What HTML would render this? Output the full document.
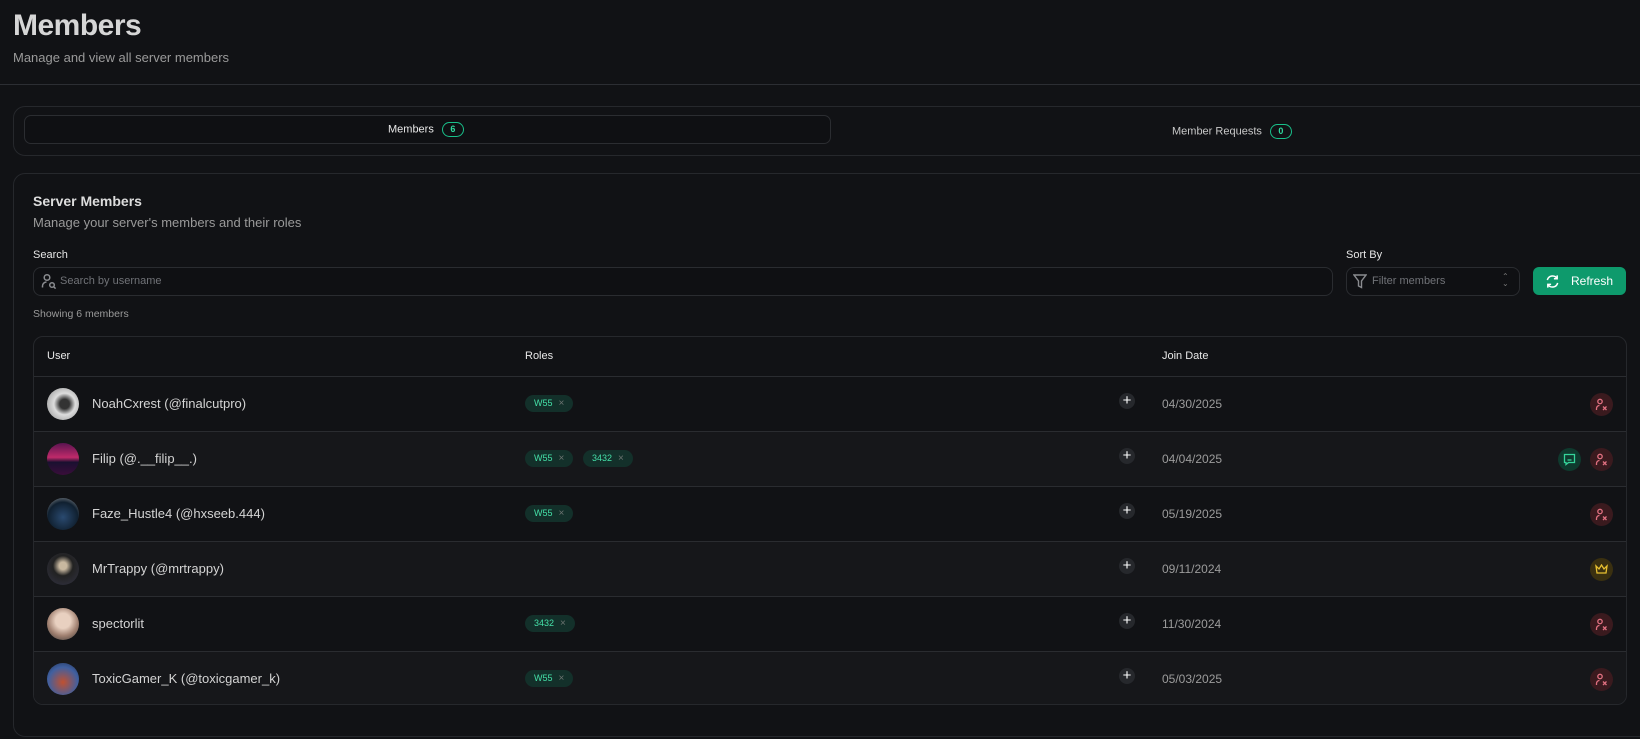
<!DOCTYPE html><html><head><meta charset="utf-8"><style>
*{box-sizing:border-box;margin:0;padding:0}
body{width:1640px;height:739px;overflow:hidden;background:#111215;font-family:"Liberation Sans",sans-serif;color:#e5e5e5;position:relative}
.abs{position:absolute}
h1{position:absolute;left:13px;top:9px;font-size:30px;font-weight:bold;color:#d6d6d6;letter-spacing:-0.5px}
.sub{left:13px;top:50px;font-size:13px;color:#9a9a9a}
.hr{left:0;top:84px;width:1640px;height:1px;background:#2c2e33}
.tabs{left:13px;top:106px;width:1660px;height:50px;border:1px solid #26282c;border-radius:12px;background:#111215}
.tab1{left:24px;top:115px;width:807px;height:29px;border:1px solid #2b2d31;border-radius:7px;background:#0f1013}
.badge{display:inline-block;border:1.5px solid #19c08a;color:#2fd99f;border-radius:9px;font-size:9px;font-weight:bold;width:22px;height:15px;line-height:12px;text-align:center;vertical-align:middle;margin-left:8px}
.tl{font-size:11px;color:#e8e8e8}
.card{left:13px;top:173px;width:1660px;height:564px;border:1px solid #26282c;border-radius:12px;background:#111215}
.lbl{font-size:11px;color:#e6e6e6}
.input{border:1px solid #2a2c30;border-radius:8px;background:#0f1013;height:29px}
.ph{font-size:11px;color:#707277}
.btn{left:1533px;top:267px;width:93px;height:28px;background:#0e9a6c;border-radius:6px;color:#fff;font-size:12px}
.table{left:33px;top:336px;width:1594px;height:369px;border:1px solid #26282c;border-radius:10px;overflow:hidden}
.th{position:absolute;top:0;height:39px;line-height:39px;font-size:11px;color:#e8e8e8}
.row{position:absolute;left:0;width:100%;height:55px;border-top:1px solid #2a2c30}
.av{position:absolute;left:13px;top:11px;width:32px;height:32px;border-radius:50%}
.nm{position:absolute;left:58px;top:19px;font-size:13px;color:#d4d4d4}
.role{position:absolute;top:18px;height:17px;border-radius:9px;background:#13302a;color:#45e0a8;font-size:9px;line-height:17px;padding:0 9px}
.role span{color:#6b7370;margin-left:6px;font-size:10px}
.plus{position:absolute;left:1085px;top:16px;width:16px;height:16px;border-radius:50%;background:#26282c;color:#fff;font-size:15px;line-height:15px;text-align:center}
.dt{position:absolute;left:1128px;top:20px;font-size:12px;color:#9c9c9c}
.ic{position:absolute;top:16px;width:23px;height:23px;border-radius:50%}
.rm{left:1556px;background:#3a1a1e}
.rm svg,.ch svg{position:absolute;left:5px;top:5px}
</style></head><body>
<h1>Members</h1>
<div class="abs sub">Manage and view all server members</div>
<div class="abs hr"></div>
<div class="abs tabs"></div>
<div class="abs tab1"></div>
<div class="abs tl" style="left:388px;top:122px">Members<span class="badge">6</span></div>
<div class="abs tl" style="left:1172px;top:124px;color:#c8c8c8">Member Requests<span class="badge">0</span></div>
<div class="abs card"></div>
<div class="abs" style="left:33px;top:193px;font-size:14px;font-weight:bold;color:#ddd">Server Members</div>
<div class="abs" style="left:33px;top:215px;font-size:13px;color:#9a9a9a">Manage your server's members and their roles</div>
<div class="abs lbl" style="left:33px;top:249px">Search</div>
<div class="abs input" style="left:33px;top:267px;width:1300px"></div>
<svg class="abs" style="left:41px;top:273px" width="16" height="16" viewBox="0 0 16 16" fill="none" stroke="#8a8c90" stroke-width="1.5"><circle cx="6" cy="4.5" r="2.8"/><path d="M1.5 14.5v-1.5a4 4 0 0 1 4-4"/><circle cx="11" cy="12" r="2.3"/><path d="M12.8 13.8l1.8 1.8"/></svg>
<div class="abs ph" style="left:60px;top:275px">Search by username</div>
<div class="abs lbl" style="left:1346px;top:249px">Sort By</div>
<div class="abs input" style="left:1346px;top:267px;width:174px"></div>
<svg class="abs" style="left:1353px;top:274px" width="14" height="15" viewBox="0 0 14 15" fill="none" stroke="#8a8c90" stroke-width="1.4"><path d="M1 1h12L8.5 7v6.5L5.5 12V7z"/></svg>
<div class="abs ph" style="left:1372px;top:275px">Filter members</div>
<div class="abs" style="left:1502px;top:273px;font-size:8px;color:#777;line-height:7px">⌃<br>⌄</div>
<div class="abs btn"><svg class="abs" style="left:12px;top:7px" width="15" height="15" viewBox="0 0 16 16" fill="none" stroke="#fff" stroke-width="1.6"><path d="M2.5 6.5A5.7 5.7 0 0 1 13 5M13 1.5V5h-3.5M13.5 9.5A5.7 5.7 0 0 1 3 11M3 14.5V11h3.5"/></svg><span class="abs" style="left:38px;top:7px">Refresh</span></div>
<div class="abs" style="left:33px;top:308px;font-size:10.5px;color:#9a9a9a">Showing 6 members</div>
<div class="abs table">
<div class="th" style="left:13px">User</div><div class="th" style="left:491px">Roles</div><div class="th" style="left:1128px">Join Date</div>
<div class="row" style="top:39px;background:#111215"><div class="av" style="background:radial-gradient(circle at 55% 50%,#333 0 20%,#ddd 45%,#888)"></div><div class="nm">NoahCxrest (@finalcutpro)</div><div class="role" style="left:491px">W55<span>×</span></div><div class="plus">+</div><div class="dt">04/30/2025</div><div class="ic rm"><svg width="13" height="13" viewBox="0 0 13 13" fill="none" stroke="#e07080" stroke-width="1.3"><circle cx="5" cy="3.5" r="2.2"/><path d="M1.5 12v-1.5a3 3 0 0 1 3-3M8 8.5l3.5 3.5M11.5 8.5L8 12"/></svg></div></div>
<div class="row" style="top:94px;background:#16171a"><div class="av" style="background:linear-gradient(#5a1450,#c02a6a 45%,#1a1030 60%,#3a0d3a)"></div><div class="nm">Filip (@.__filip__.)</div><div class="role" style="left:491px">W55<span>×</span></div><div class="role" style="left:549px">3432<span>×</span></div><div class="plus">+</div><div class="dt">04/04/2025</div><div class="ic ch" style="left:1524px;background:#0f3a2e"><svg width="13" height="13" viewBox="0 0 13 13" fill="none" stroke="#35d49a" stroke-width="1.3"><path d="M1.5 1.5h10v8h-6l-2.5 2v-2h-1.5z"/><path d="M4.5 7h4"/></svg></div><div class="ic rm"><svg width="13" height="13" viewBox="0 0 13 13" fill="none" stroke="#e07080" stroke-width="1.3"><circle cx="5" cy="3.5" r="2.2"/><path d="M1.5 12v-1.5a3 3 0 0 1 3-3M8 8.5l3.5 3.5M11.5 8.5L8 12"/></svg></div></div>
<div class="row" style="top:149px;background:#111215"><div class="av" style="background:radial-gradient(circle at 50% 60%,#2a4a70,#102030 60%,#aaa)"></div><div class="nm">Faze_Hustle4 (@hxseeb.444)</div><div class="role" style="left:491px">W55<span>×</span></div><div class="plus">+</div><div class="dt">05/19/2025</div><div class="ic rm"><svg width="13" height="13" viewBox="0 0 13 13" fill="none" stroke="#e07080" stroke-width="1.3"><circle cx="5" cy="3.5" r="2.2"/><path d="M1.5 12v-1.5a3 3 0 0 1 3-3M8 8.5l3.5 3.5M11.5 8.5L8 12"/></svg></div></div>
<div class="row" style="top:204px;background:#16171a"><div class="av" style="background:radial-gradient(circle at 50% 40%,#c8b8a0 0 15%,#222 40%,#334)"></div><div class="nm">MrTrappy (@mrtrappy)</div><div class="plus">+</div><div class="dt">09/11/2024</div><div class="ic" style="left:1556px;background:#3a3010"><svg style="position:absolute;left:5px;top:6px" width="13" height="11" viewBox="0 0 13 11" fill="none" stroke="#e8c030" stroke-width="1.3"><path d="M1 2l3 3 2.5-4 2.5 4 3-3-1 7H2z"/></svg></div></div>
<div class="row" style="top:259px;background:#111215"><div class="av" style="background:radial-gradient(circle at 50% 40%,#e8d0c0 0 30%,#a08070 60%,#333)"></div><div class="nm">spectorlit</div><div class="role" style="left:491px">3432<span>×</span></div><div class="plus">+</div><div class="dt">11/30/2024</div><div class="ic rm"><svg width="13" height="13" viewBox="0 0 13 13" fill="none" stroke="#e07080" stroke-width="1.3"><circle cx="5" cy="3.5" r="2.2"/><path d="M1.5 12v-1.5a3 3 0 0 1 3-3M8 8.5l3.5 3.5M11.5 8.5L8 12"/></svg></div></div>
<div class="row" style="top:314px;background:#16171a"><div class="av" style="background:radial-gradient(circle at 50% 60%,#c05030,#4060a0 60%,#203050)"></div><div class="nm">ToxicGamer_K (@toxicgamer_k)</div><div class="role" style="left:491px">W55<span>×</span></div><div class="plus">+</div><div class="dt">05/03/2025</div><div class="ic rm"><svg width="13" height="13" viewBox="0 0 13 13" fill="none" stroke="#e07080" stroke-width="1.3"><circle cx="5" cy="3.5" r="2.2"/><path d="M1.5 12v-1.5a3 3 0 0 1 3-3M8 8.5l3.5 3.5M11.5 8.5L8 12"/></svg></div></div>
</div>
</body></html>
